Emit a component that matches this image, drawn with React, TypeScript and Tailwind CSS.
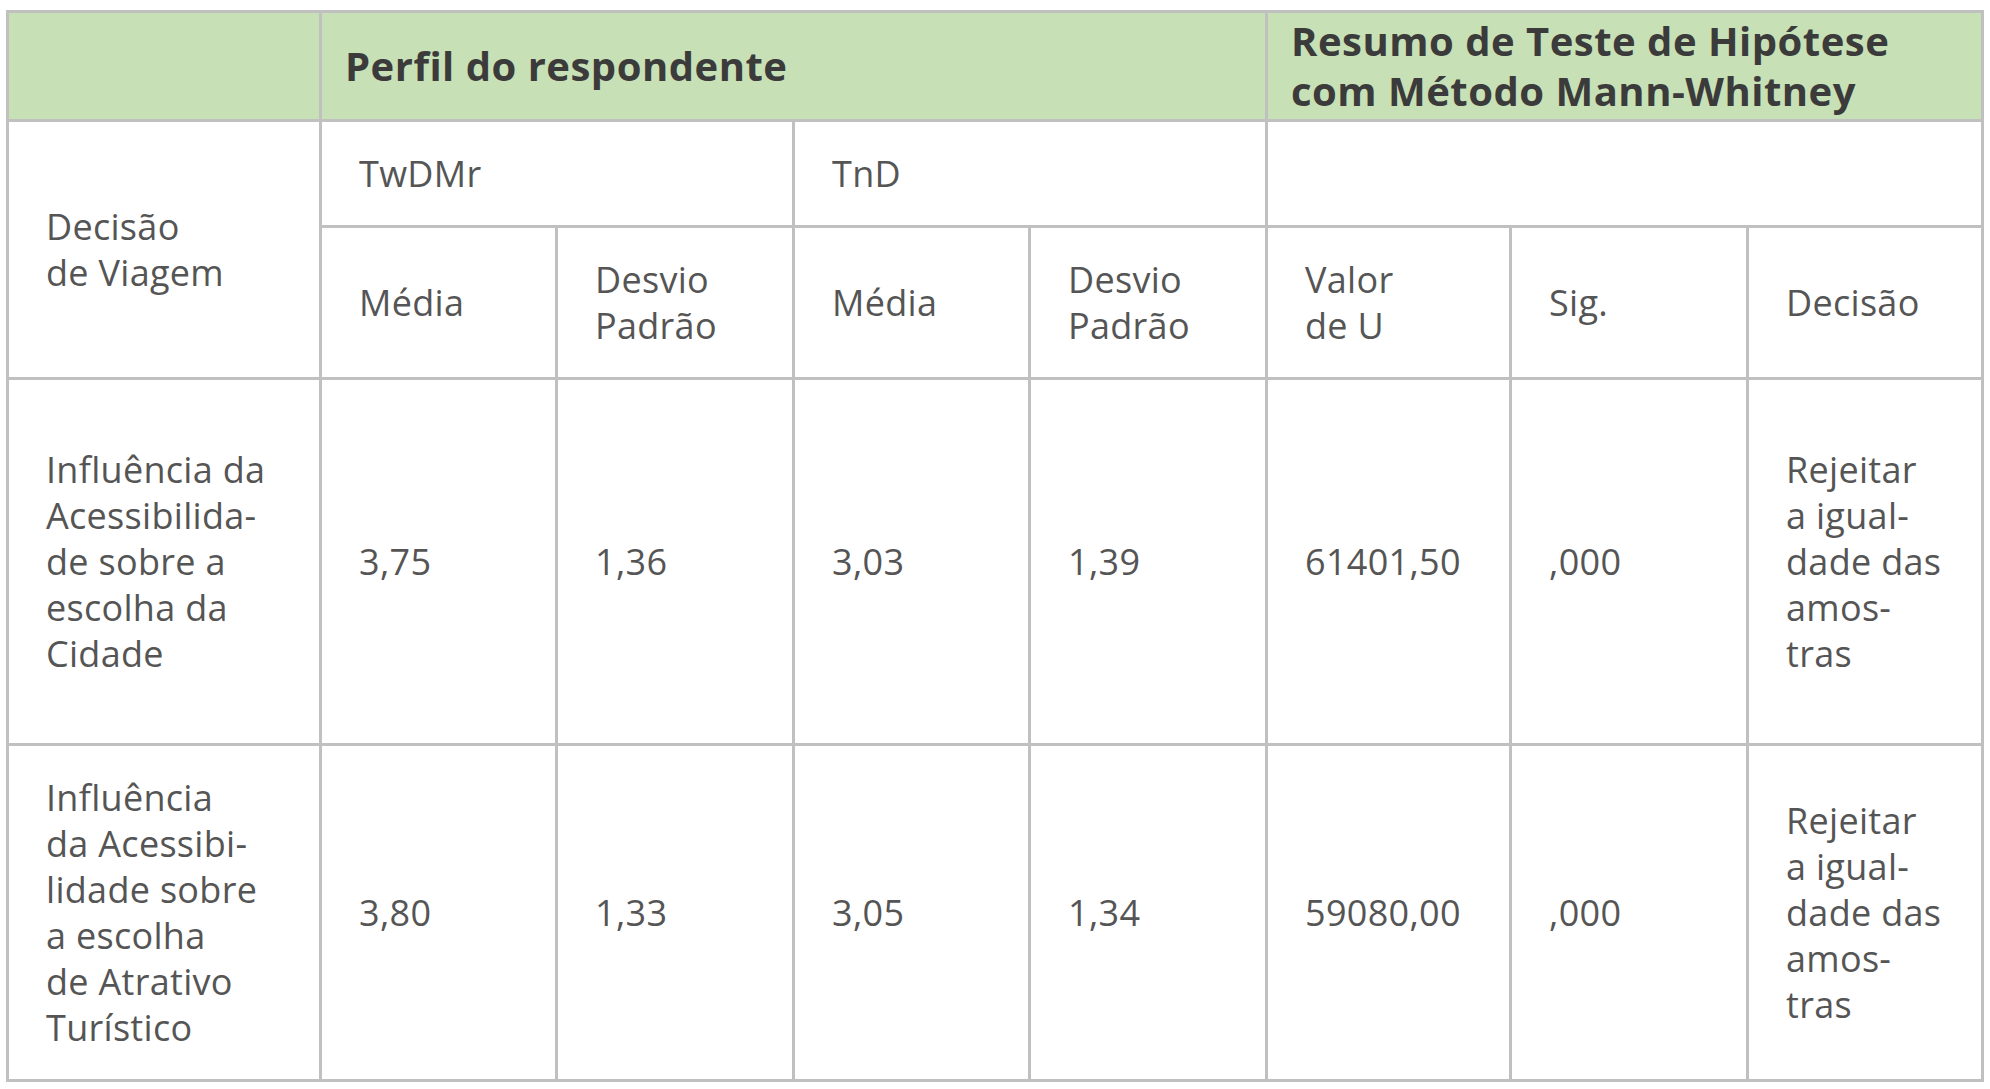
import React from "react";

const B = "border-[3px] border-[#c0c0c0]";
const body = `${B} align-middle pl-[37px] pr-2 text-[36px] tracking-[0.3px] leading-[46px] text-[#555555] font-normal whitespace-nowrap`;
const head = `${B} align-middle pl-[23px] pr-2 text-[40px] tracking-[0.5px] leading-[50px] text-[#3b3b3b] font-bold whitespace-nowrap bg-[#c8e0b5]`;

function L({ lines }: { lines: string[] }) {
  return (
    <>
      {lines.map((l, i) => (
        <React.Fragment key={i}>
          {i > 0 && <br />}
          {l}
        </React.Fragment>
      ))}
    </>
  );
}

const rows = [
  {
    label: ["Influência da", "Acessibilida-", "de sobre a", "escolha da", "Cidade"],
    vals: ["3,75", "1,36", "3,03", "1,39", "61401,50", ",000"],
    h: "h-[366px]",
  },
  {
    label: ["Influência", "da Acessibi-", "lidade sobre", "a escolha", "de Atrativo", "Turístico"],
    vals: ["3,80", "1,33", "3,05", "1,34", "59080,00", ",000"],
    h: "h-[336px]",
  },
];

export default function App() {
  return (
    <div className="bg-white w-[1990px] h-[1089px] pt-[10px] pl-[6px]" style={{ fontFamily: '"Open Sans", sans-serif' }}>
      <table className="table-fixed border-collapse w-[1978px]">
        <colgroup>
          <col className="w-[313px]" />
          <col className="w-[236px]" />
          <col className="w-[237px]" />
          <col className="w-[236px]" />
          <col className="w-[237px]" />
          <col className="w-[244px]" />
          <col className="w-[237px]" />
          <col className="w-[235px]" />
        </colgroup>
        <tbody>
          <tr className="h-[109px]">
            <td className={head}></td>
            <td className={head} colSpan={4}>
              Perfil do respondente
            </td>
            <td className={head} colSpan={3}>
              <L lines={["Resumo de Teste de Hipótese", "com Método Mann-Whitney"]} />
            </td>
          </tr>
          <tr className="h-[106px]">
            <td className={body} rowSpan={2}>
              <L lines={["Decisão", "de Viagem"]} />
            </td>
            <td className={body} colSpan={2}>
              TwDMr
            </td>
            <td className={body} colSpan={2}>
              TnD
            </td>
            <td className={body} colSpan={3}></td>
          </tr>
          <tr className="h-[152px]">
            <td className={body}>Média</td>
            <td className={body}>
              <L lines={["Desvio", "Padrão"]} />
            </td>
            <td className={body}>Média</td>
            <td className={body}>
              <L lines={["Desvio", "Padrão"]} />
            </td>
            <td className={body}>
              <L lines={["Valor", "de U"]} />
            </td>
            <td className={body}>Sig.</td>
            <td className={body}>Decisão</td>
          </tr>
          {rows.map((r, i) => (
            <tr key={i} className={r.h}>
              <td className={body}>
                <L lines={r.label} />
              </td>
              {r.vals.map((v, j) => (
                <td key={j} className={body}>
                  {v}
                </td>
              ))}
              <td className={body}>
                <L lines={["Rejeitar", "a igual-", "dade das", "amos-", "tras"]} />
              </td>
            </tr>
          ))}
        </tbody>
      </table>
    </div>
  );
}
